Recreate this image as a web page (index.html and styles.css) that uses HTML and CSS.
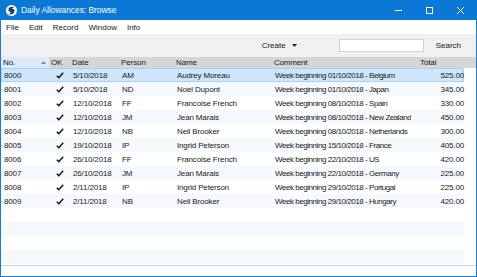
FILE: index.html
```html
<!DOCTYPE html>
<html lang="en">
<head>
    <meta charset="UTF-8">
    <title>Daily Allowances: Browse</title>
    <link rel="stylesheet" href="styles.css">
</head>
<body>
    <div class="window">
        <!-- Title bar -->
        <div class="titlebar">
            <svg class="app-icon" width="11" height="11" viewBox="0 0 11 11">
                <circle cx="5.5" cy="5.5" r="5.5" fill="#fff"/>
                <path d="M7.8 2.2 C5.6 1.2 2.6 2.2 2.4 4.6 C2.2 6.6 4.2 7.4 5.8 6.8 C4.6 7.6 3.4 8.4 3.2 9.4 C5.8 9.8 8.6 8.2 8.6 5.8 C8.6 4.4 7.2 3.8 5.8 4.2 C6.2 3.4 7 2.8 7.8 2.2 Z" fill="#1b3d63"/>
            </svg>
            <span class="title">Daily Allowances: Browse</span>
            <div class="controls">
                <svg width="9" height="9" viewBox="0 0 9 9"><path d="M1 4.5 H8" stroke="#fff" stroke-width="1"/></svg>
                <svg width="9" height="9" viewBox="0 0 9 9"><rect x="1.5" y="1.5" width="6" height="6" fill="none" stroke="#fff" stroke-width="1"/></svg>
                <svg width="9" height="9" viewBox="0 0 9 9"><path d="M1 1 L8 8 M8 1 L1 8" stroke="#fff" stroke-width="1"/></svg>
            </div>
        </div>

        <!-- Menu -->
        <div class="menubar">
            <span>File</span>
            <span>Edit</span>
            <span>Record</span>
            <span>Window</span>
            <span>Info</span>
        </div>

        <!-- Toolbar -->
        <div class="toolbar">
            <span class="create">Create
                <svg width="5" height="3" viewBox="0 0 5 3"><path d="M0 0 H5 L2.5 3 Z" fill="#222"/></svg>
            </span>
            <input class="search-box" type="text">
            <span class="search-btn">Search</span>
        </div>

        <!-- Browse list -->
        <div class="list">
            <div class="row head">
                <div class="c-no sorted">No.
                    <svg class="sort" width="5" height="3" viewBox="0 0 5 3"><path d="M0 3 H5 L2.5 0 Z" fill="#8a8a8a"/></svg>
                </div>
                <div class="c-ok">OK</div>
                <div class="c-date">Date</div>
                <div class="c-person">Person</div>
                <div class="c-name">Name</div>
                <div class="c-comment">Comment</div>
                <div class="c-total">Total</div>
            </div>

            <div class="row selected">
                <div class="c-no">8000</div>
                <div class="c-ok"><svg class="tick" width="8" height="7" viewBox="0 0 8 7"><path d="M0.8 3.8 L2.8 5.8 L7.2 0.8" fill="none" stroke="#111" stroke-width="1.4"/></svg></div>
                <div class="c-date">5/10/2018</div>
                <div class="c-person">AM</div>
                <div class="c-name">Audrey Moreau</div>
                <div class="c-comment">Week beginning 01/10/2018 - Belgium</div>
                <div class="c-total">525.00</div>
            </div>
            <div class="row alt">
                <div class="c-no">8001</div>
                <div class="c-ok"><svg class="tick" width="8" height="7" viewBox="0 0 8 7"><path d="M0.8 3.8 L2.8 5.8 L7.2 0.8" fill="none" stroke="#111" stroke-width="1.4"/></svg></div>
                <div class="c-date">5/10/2018</div>
                <div class="c-person">ND</div>
                <div class="c-name">Noel Dupont</div>
                <div class="c-comment">Week beginning 01/10/2018 - Japan</div>
                <div class="c-total">345.00</div>
            </div>
            <div class="row">
                <div class="c-no">8002</div>
                <div class="c-ok"><svg class="tick" width="8" height="7" viewBox="0 0 8 7"><path d="M0.8 3.8 L2.8 5.8 L7.2 0.8" fill="none" stroke="#111" stroke-width="1.4"/></svg></div>
                <div class="c-date">12/10/2018</div>
                <div class="c-person">FF</div>
                <div class="c-name">Francoise French</div>
                <div class="c-comment">Week beginning 08/10/2018 - Spain</div>
                <div class="c-total">330.00</div>
            </div>
            <div class="row alt">
                <div class="c-no">8003</div>
                <div class="c-ok"><svg class="tick" width="8" height="7" viewBox="0 0 8 7"><path d="M0.8 3.8 L2.8 5.8 L7.2 0.8" fill="none" stroke="#111" stroke-width="1.4"/></svg></div>
                <div class="c-date">12/10/2018</div>
                <div class="c-person">JM</div>
                <div class="c-name">Jean Marais</div>
                <div class="c-comment">Week beginning 08/10/2018 - New Zealand</div>
                <div class="c-total">450.00</div>
            </div>
            <div class="row">
                <div class="c-no">8004</div>
                <div class="c-ok"><svg class="tick" width="8" height="7" viewBox="0 0 8 7"><path d="M0.8 3.8 L2.8 5.8 L7.2 0.8" fill="none" stroke="#111" stroke-width="1.4"/></svg></div>
                <div class="c-date">12/10/2018</div>
                <div class="c-person">NB</div>
                <div class="c-name">Neil Brooker</div>
                <div class="c-comment">Week beginning 08/10/2018 - Netherlands</div>
                <div class="c-total">300.00</div>
            </div>
            <div class="row alt">
                <div class="c-no">8005</div>
                <div class="c-ok"><svg class="tick" width="8" height="7" viewBox="0 0 8 7"><path d="M0.8 3.8 L2.8 5.8 L7.2 0.8" fill="none" stroke="#111" stroke-width="1.4"/></svg></div>
                <div class="c-date">19/10/2018</div>
                <div class="c-person">IP</div>
                <div class="c-name">Ingrid Peterson</div>
                <div class="c-comment">Week beginning 15/10/2018 - France</div>
                <div class="c-total">405.00</div>
            </div>
            <div class="row">
                <div class="c-no">8006</div>
                <div class="c-ok"><svg class="tick" width="8" height="7" viewBox="0 0 8 7"><path d="M0.8 3.8 L2.8 5.8 L7.2 0.8" fill="none" stroke="#111" stroke-width="1.4"/></svg></div>
                <div class="c-date">26/10/2018</div>
                <div class="c-person">FF</div>
                <div class="c-name">Francoise French</div>
                <div class="c-comment">Week beginning 22/10/2018 - US</div>
                <div class="c-total">420.00</div>
            </div>
            <div class="row alt">
                <div class="c-no">8007</div>
                <div class="c-ok"><svg class="tick" width="8" height="7" viewBox="0 0 8 7"><path d="M0.8 3.8 L2.8 5.8 L7.2 0.8" fill="none" stroke="#111" stroke-width="1.4"/></svg></div>
                <div class="c-date">26/10/2018</div>
                <div class="c-person">JM</div>
                <div class="c-name">Jean Marais</div>
                <div class="c-comment">Week beginning 22/10/2018 - Germany</div>
                <div class="c-total">225.00</div>
            </div>
            <div class="row">
                <div class="c-no">8008</div>
                <div class="c-ok"><svg class="tick" width="8" height="7" viewBox="0 0 8 7"><path d="M0.8 3.8 L2.8 5.8 L7.2 0.8" fill="none" stroke="#111" stroke-width="1.4"/></svg></div>
                <div class="c-date">2/11/2018</div>
                <div class="c-person">IP</div>
                <div class="c-name">Ingrid Peterson</div>
                <div class="c-comment">Week beginning 29/10/2018 - Portugal</div>
                <div class="c-total">225.00</div>
            </div>
            <div class="row alt">
                <div class="c-no">8009</div>
                <div class="c-ok"><svg class="tick" width="8" height="7" viewBox="0 0 8 7"><path d="M0.8 3.8 L2.8 5.8 L7.2 0.8" fill="none" stroke="#111" stroke-width="1.4"/></svg></div>
                <div class="c-date">2/11/2018</div>
                <div class="c-person">NB</div>
                <div class="c-name">Neil Brooker</div>
                <div class="c-comment">Week beginning 29/10/2018 - Hungary</div>
                <div class="c-total">420.00</div>
            </div>

            <!-- Empty rows -->
            <div class="row empty"></div>
            <div class="row empty alt"></div>
            <div class="row empty"></div>
            <div class="row empty alt"></div>
        </div>

        <div class="statusbar"></div>
    </div>
</body>
</html>
```

FILE: styles.css
```css
/* Reset */
* {
    margin: 0;
    padding: 0;
    box-sizing: border-box;
}

body {
    width: 477px;
    height: 277px;
    overflow: hidden;
    background: #fff;
    font-family: 'Liberation Sans', Arial, sans-serif;
    font-size: 8px;
    color: #1a1a1a;
}

/* Window frame */
.window {
    width: 477px;
    height: 277px;
    display: flex;
    flex-direction: column;
    border: 1px solid #1a7bd3;
    border-top: none;
}

/* Title bar */
.titlebar {
    height: 20px;
    flex: none;
    display: flex;
    align-items: center;
    background: #0c78d6;
    color: #fff;
    margin: 0 -1px;
    padding-left: 6px;
}

.app-icon {
    flex: none;
}

.title {
    margin-left: 4px;
    font-size: 8.4px;
}

.controls {
    margin-left: auto;
    display: flex;
    gap: 22px;
    padding-right: 12px;
}

/* Menu bar */
.menubar {
    height: 14px;
    flex: none;
    display: flex;
    align-items: center;
    background: #fff;
}

.menubar span {
    padding: 0 5px;
}

/* Toolbar */
.toolbar {
    height: 23px;
    flex: none;
    display: flex;
    align-items: center;
    justify-content: flex-end;
    background: #f0f0f0;
    padding-right: 15px;
}

.create {
    display: flex;
    align-items: center;
    gap: 6px;
}

.search-box {
    width: 85px;
    height: 13px;
    margin-left: 42px;
    border: 1px solid #d2d2d2;
    background: #fff;
    outline: none;
}

.search-btn {
    margin-left: 12px;
}

/* Browse list */
.list {
    flex: none;
    display: flex;
    flex-direction: column;
}

.row {
    display: grid;
    grid-template-columns: 48px 20px 50px 55px 98px 138px 54px;
    height: 14px;
    align-items: center;
    width: 463px;
    border: 1px solid transparent;
    letter-spacing: -0.15px;
}

.row > div {
    padding-left: 2px;
    white-space: nowrap;
    overflow: hidden;
}

.row .c-comment {
    letter-spacing: -0.45px;
}

.row.alt {
    background: #f5f9fe;
}

.row.selected {
    background: #cce6fb;
    border-color: #a9d3f5;
}

.row.head {
    width: 100%;
    height: 11px;
    border: none;
    background: #d6d6d6;
    align-items: stretch;
    letter-spacing: -0.1px;
}

.row.head > div {
    display: flex;
    align-items: center;
}

.row.head .c-comment {
    letter-spacing: -0.2px;
}

.row.head .sorted {
    background: #dcebf8;
    justify-content: space-between;
    padding-right: 3px;
}

.c-ok {
    display: flex;
    justify-content: center;
}

.row .c-ok {
    padding-left: 0;
}

.row.head .c-ok {
    justify-content: flex-start;
    padding-left: 2px;
}

.c-date {
    padding-left: 3px !important;
}

.row .c-total {
    text-align: right;
    padding-left: 0;
    padding-right: 1px;
}

.row.head .c-total {
    justify-content: flex-start;
    padding-left: 10px;
}

/* Bottom area */
.statusbar {
    flex: 1;
    border-top: 1px solid #d4d4d4;
    margin-top: 1px;
    background: #fff;
}
```
